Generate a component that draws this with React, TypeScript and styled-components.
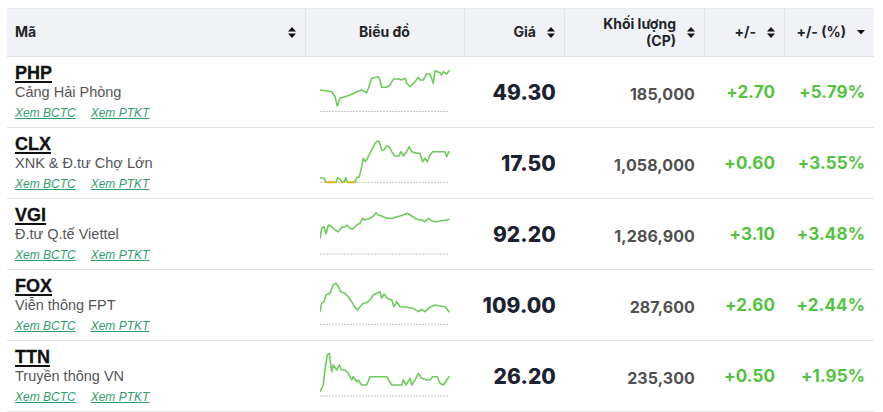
import React from "react";
import styled, { createGlobalStyle } from "styled-components";

const GlobalStyle = createGlobalStyle`
  html, body { margin: 0; padding: 0; background: #ffffff; }
  body { font-family: "Liberation Sans", Arial, sans-serif; }
`;

const COLS = "298px 159px 100px 140px 80px 90px";

const Page = styled.div`
  padding: 8px 0 0 7px;
`;

const Table = styled.div`
  width: 867px;
  display: flex;
  flex-direction: column;
`;

const HeaderRow = styled.div`
  display: grid;
  grid-template-columns: ${COLS};
  height: 49px;
  box-sizing: border-box;
  background: #f1f2f6;
  border-top: 1px solid #e9eaee;
  border-bottom: 1px solid #e1e2e6;
`;

const HeadCell = styled.div<{ $align: "left" | "center" | "right"; $divider?: boolean }>`
  display: flex;
  align-items: center;
  justify-content: ${(p) =>
    p.$align === "left" ? "space-between" : p.$align === "center" ? "center" : "flex-end"};
  gap: 11px;
  padding: 0 9px 0 8px;
  border-left: ${(p) => (p.$divider ? "1px solid #e1e2e7" : "none")};
  font-family: Inter, "Noto Sans", sans-serif;
  font-weight: 700;
  font-size: 14px;
  color: #222428;
  text-align: right;
  line-height: 16.5px;
`;

const Row = styled.div`
  display: grid;
  grid-template-columns: ${COLS};
  height: 71px;
  box-sizing: border-box;
  border-bottom: 1px solid #e3e3e3;
`;

const StockCell = styled.div`
  display: flex;
  flex-direction: column;
  padding: 7px 0 0 8px;
`;

const Ticker = styled.a`
  font-family: "Liberation Sans", Arial, sans-serif;
  font-weight: 700;
  font-size: 18px;
  line-height: 19px;
  color: #111111;
  text-decoration: underline;
  text-decoration-thickness: 2px;
  text-underline-offset: 2px;
  align-self: flex-start;
  -webkit-text-stroke: 0.3px #111111;
`;

const Name = styled.div`
  font-size: 14.5px;
  line-height: 18px;
  color: #555555;
`;

const Links = styled.div`
  display: flex;
  gap: 15px;
  margin-top: 5px;
`;

const DocLink = styled.a`
  font-size: 12px;
  font-style: italic;
  color: #2f9d6b;
  text-decoration: underline;
  line-height: 14px;
`;

const ChartCell = styled.div`
  padding: 8px 0 0 15px;
`;

const NumCell = styled.div<{ $size: number; $color: string; $weight: number; $pad?: number; $drop?: number }>`
  display: flex;
  align-items: center;
  justify-content: flex-end;
  padding-right: ${(p) => p.$pad ?? 9}px;
  padding-top: ${(p) => p.$drop ?? 0}px;
  font-family: Inter, "Noto Sans", sans-serif;
  font-weight: ${(p) => p.$weight};
  font-size: ${(p) => p.$size}px;
  color: ${(p) => p.$color};
  letter-spacing: 0.1px;
`;

const SortIcon = () => (
  <svg width="8" height="11" viewBox="0 0 8 11">
    <polygon points="0,4.5 4,0 8,4.5" fill="#111" />
    <polygon points="0,6.5 8,6.5 4,11" fill="#111" />
  </svg>
);

const DownIcon = () => (
  <svg width="8" height="5" viewBox="0 0 8 5">
    <polygon points="0,0 8,0 4,4.5" fill="#111" />
  </svg>
);

type Stock = {
  ticker: string;
  name: string;
  price: string;
  volume: string;
  change: string;
  pct: string;
  line: string;
  base: number;
  flats?: [number, number][];
};

const stocks: Stock[] = [
  {
    ticker: "PHP",
    name: "Cảng Hải Phòng",
    price: "49.30",
    volume: "185,000",
    change: "+2.70",
    pct: "+5.79%",
    base: 46.5,
    line:
      "0,25 11.7,26.7 15,31.7 17.3,41 20,33.3 25,31.7 30,30 36.7,26.7 41.7,25 46.7,27.7 48.3,23.3 51.7,13.3 58.3,11.7 60,15 61.7,22.3 66.7,22.3 70,20 73.3,14.3 78.3,13.7 81.7,15 85,13.3 86.7,18.3 90,21.7 95,16.7 98.3,12.3 100,15 103.3,15 106.7,9 110,9 113.3,18.3 115,5.7 120,7.7 121.7,10 123.3,6.7 126.7,9 129,5.7",
  },
  {
    ticker: "CLX",
    name: "XNK & Đ.tư Chợ Lớn",
    price: "17.50",
    volume: "1,058,000",
    change: "+0.60",
    pct: "+3.55%",
    base: 46.3,
    flats: [
      [6, 16],
      [21.7, 24],
      [27.3, 35],
    ],
    line:
      "0,41.7 4,42.3 6,46.3 16,46.3 17.7,41.7 20,43.3 21.7,46.3 24,46.3 25.7,41.7 27.3,46.3 35,46.3 36.7,41.7 39.3,40.7 41.7,30.7 43.3,22.3 45.7,25.7 48.3,20.7 51.7,14 55,7.3 57.3,5 59.3,5.7 61.7,14 64,14 66.7,10 69.3,10.7 71.7,15.7 75,20 79,20 81,15.7 83.3,20 86.7,15.7 89.3,10.7 91.7,15.7 96.7,17.3 100,17.3 102.7,25.7 105,22.3 107.3,25.7 110,19 112.7,15.7 125,15.7 126.7,20.7 129,15.7",
  },
  {
    ticker: "VGI",
    name: "Đ.tư Q.tế Viettel",
    price: "92.20",
    volume: "1,286,900",
    change: "+3.10",
    pct: "+3.48%",
    base: 47,
    line:
      "0,31.3 1.7,21.3 4,19.7 6,27 8.3,18 11.7,19.7 15,23 18.3,24.7 21.7,20.3 25,19.7 26.7,18 30,21.3 32.7,22.3 36.7,18 40,16.3 42.7,11.3 45,13 50,11.3 53.3,9 56,5.7 58.3,8 61.7,9 66.7,11.3 73.3,11.3 76.7,9.7 80,9 83.3,8 87.3,6.3 91.7,9 96.7,12.3 101.7,13 105,14.7 108.3,11.3 111.7,13.7 116.7,14.7 121.7,13.7 126.7,13 129,12.3",
  },
  {
    ticker: "FOX",
    name: "Viễn thông FPT",
    price: "109.00",
    volume: "287,600",
    change: "+2.60",
    pct: "+2.44%",
    base: 46.3,
    line:
      "0,33.7 1.7,25.3 4,23.7 6,17 10,15.3 13.3,7 16,5.3 18.3,8.7 20.7,13.7 25,15.3 28.3,18.7 31.7,23.7 35,29.3 37.3,32 40,28.7 43.3,25.3 46.7,24.7 50,22 53.3,17 56.7,15.3 60,13.7 61.7,20.3 64,16 67.3,20.3 71.7,22 74,28.7 76.7,23.7 80,28.7 86.7,29.3 93.3,30.3 98.3,33.7 101.7,31.3 105,33.7 110,29.3 115,27 120,28 125,28.7 129,33.7",
  },
  {
    ticker: "TTN",
    name: "Truyền thông VN",
    price: "26.20",
    volume: "235,300",
    change: "+0.50",
    pct: "+1.95%",
    base: 47,
    line:
      "0,42.7 3.3,36 5,21 7.3,6 9.3,4.3 11.7,22.7 13.3,16 16.7,21 19.3,16 21.7,21 25,21 28.3,24.3 31.7,31 33.3,27.7 36.7,32.7 38.3,31 41.7,36 46.7,36 50,27.7 66.7,27.7 71.7,36 81.7,36 83.3,31 86,36 90,29.3 91.7,36 95,31 98.3,24.3 101.7,29.3 106.7,31 110,31 112.7,27.7 117.3,27.7 120,34.3 123.3,36 126.7,31 129,27.7",
  },
];

const Spark = ({ s }: { s: Stock }) => (
  <svg width="131" height="50" viewBox="0 0 131 50">
    <line
      x1="0"
      y1={s.base}
      x2="129"
      y2={s.base}
      stroke="#c4c4c4"
      strokeWidth="1"
      strokeDasharray="2 1"
    />
    <polyline
      points={s.line}
      fill="none"
      stroke="#6ccc5a"
      strokeWidth="1.6"
      strokeLinejoin="round"
      strokeLinecap="round"
    />
    {s.flats?.map(([a, b]) => (
      <line key={a} x1={a} y1={s.base} x2={b} y2={s.base} stroke="#f2b705" strokeWidth="1.8" />
    ))}
  </svg>
);

export default function App() {
  return (
    <>
      <GlobalStyle />
      <Page>
        <Table>
          <HeaderRow>
            <HeadCell $align="left">
              <span>Mã</span>
              <SortIcon />
            </HeadCell>
            <HeadCell $align="center" $divider>
              Biểu đồ
            </HeadCell>
            <HeadCell $align="right" $divider>
              <span>Giá</span>
              <SortIcon />
            </HeadCell>
            <HeadCell $align="right" $divider>
              <span>
                Khối lượng
                <br />
                (CP)
              </span>
              <SortIcon />
            </HeadCell>
            <HeadCell $align="right" $divider>
              <span>+/-</span>
              <SortIcon />
            </HeadCell>
            <HeadCell $align="right" $divider>
              <span>+/- (%)</span>
              <DownIcon />
            </HeadCell>
          </HeaderRow>
          {stocks.map((s) => (
            <Row key={s.ticker}>
              <StockCell>
                <Ticker>{s.ticker}</Ticker>
                <Name>{s.name}</Name>
                <Links>
                  <DocLink>Xem BCTC</DocLink>
                  <DocLink>Xem PTKT</DocLink>
                </Links>
              </StockCell>
              <ChartCell>
                <Spark s={s} />
              </ChartCell>
              <NumCell $size={21} $weight={800} $color="#1d2230" $pad={8}>
                {s.price}
              </NumCell>
              <NumCell $size={16} $weight={700} $color="#505050" $drop={4}>
                {s.volume}
              </NumCell>
              <NumCell $size={17} $weight={700} $color="#52c33e">
                {s.change}
              </NumCell>
              <NumCell $size={17} $weight={700} $color="#52c33e">
                {s.pct}
              </NumCell>
            </Row>
          ))}
        </Table>
      </Page>
    </>
  );
}
